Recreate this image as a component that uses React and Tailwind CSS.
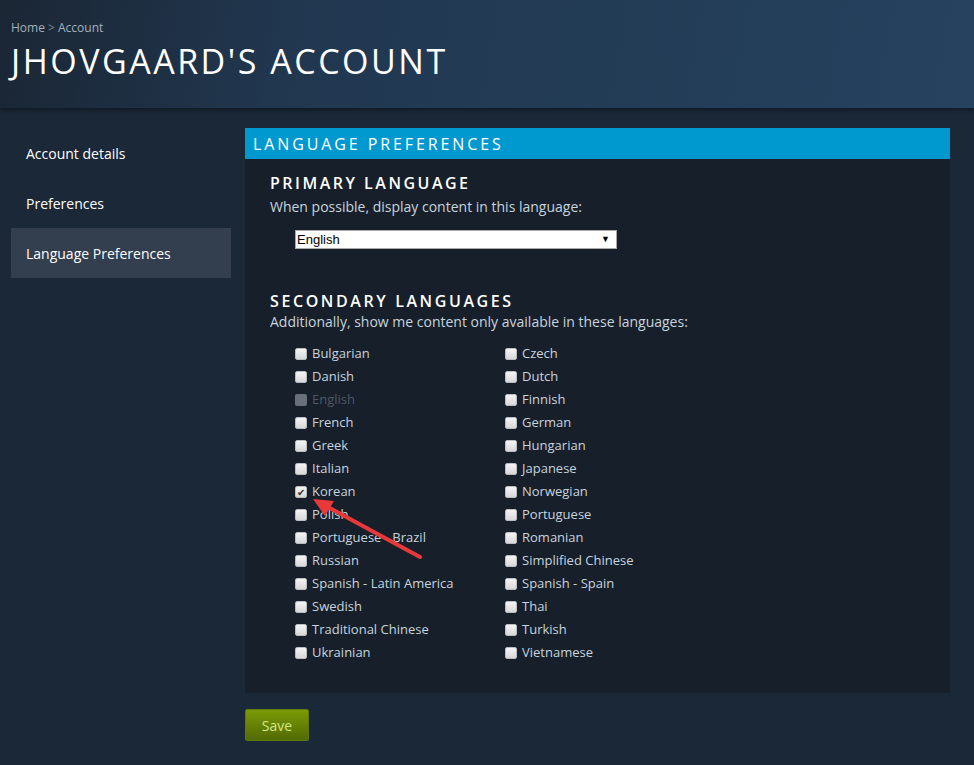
import React from "react";

const LEFT = ["Bulgarian", "Danish", "English", "French", "Greek", "Italian", "Korean", "Polish", "Portuguese - Brazil", "Russian", "Spanish - Latin America", "Swedish", "Traditional Chinese", "Ukrainian"];
const RIGHT = ["Czech", "Dutch", "Finnish", "German", "Hungarian", "Japanese", "Norwegian", "Portuguese", "Romanian", "Simplified Chinese", "Spanish - Spain", "Thai", "Turkish", "Vietnamese"];

function Check({ label }) {
  const disabled = label === "English";
  const checked = label === "Korean";
  return (
    <div className="flex items-center h-[23px] gap-[5px]">
      <span
        className={`w-[12px] h-[12px] rounded-[2px] flex items-center justify-center text-[10px] leading-none text-[#333] ${
          disabled
            ? "bg-[#6a7079]"
            : "bg-[linear-gradient(#f4f4f4,#d8d8d8)] border border-[#b9bcc0]"
        }`}
      >
        {checked ? "✔" : ""}
      </span>
      <span className={disabled ? "text-[#4e5864]" : "text-[#c6d4df]"}>{label}</span>
    </div>
  );
}

export default function App() {
  return (
    <div className="relative min-h-screen w-full bg-[#1b2838] font-['Open_Sans',sans-serif] text-[13px]">
      {/* Header */}
      <div className="h-[108px] bg-[linear-gradient(100deg,#1a2634_0%,#213750_30%,#25425e_100%)] px-[11px] pt-[19px] shadow-[0_2px_4px_rgba(0,0,0,0.4)]">
        <div className="text-[12px] text-[#a4b0bc]">
          Home <span className="text-[#7a8896]">&gt;</span> Account
        </div>
        <h1 className="mt-[6px] text-[34px] leading-[36px] tracking-[2.5px] text-white font-normal">
          JHOVGAARD'S ACCOUNT
        </h1>
      </div>

      <div className="flex pt-[20px] gap-[14px] pl-[11px] pr-[24px]">
        {/* Sidebar */}
        <nav className="w-[220px] shrink-0 text-[14px] text-white">
          <div className="h-[50px] flex items-center pl-[15px]">Account details</div>
          <div className="h-[50px] flex items-center pl-[15px]">Preferences</div>
          <div className="h-[50px] flex items-center pl-[15px] bg-[#333e4e]">Language Preferences</div>
        </nav>

        {/* Main */}
        <div className="flex-1">
          <div className="bg-[#171f2a]">
            <div className="h-[31px] bg-[#0099cf] flex items-center pl-[8px] text-[16px] tracking-[2.9px] text-white">
              LANGUAGE PREFERENCES
            </div>
            <div className="pl-[25px] pt-[13px] pb-[29px]">
              <h2 className="text-[16px] font-semibold tracking-[2.5px] text-white leading-[22px]">PRIMARY LANGUAGE</h2>
              <p className="mt-[3px] text-[14px] text-[#c6d4df] leading-[20px]">When possible, display content in this language:</p>
              <div className="ml-[25px] mt-[13px] w-[322px] h-[19px] bg-white border border-[#a9a9a9] flex items-center justify-between pl-[1px] pr-[6px] font-['Liberation_Sans',sans-serif] text-[13px] text-black">
                <span>English</span>
                <span className="text-[9px]">▼</span>
              </div>

              <h2 className="mt-[41px] text-[16px] font-semibold tracking-[2.6px] text-white leading-[22px]">SECONDARY LANGUAGES</h2>
              <p className="text-[14px] text-[#c6d4df] leading-[20px]">Additionally, show me content only available in these languages:</p>
              <div className="ml-[25px] mt-[10px] grid grid-cols-[210px_210px]">
                <div>
                  {LEFT.map((l) => (
                    <Check key={l} label={l} />
                  ))}
                </div>
                <div>
                  {RIGHT.map((l) => (
                    <Check key={l} label={l} />
                  ))}
                </div>
              </div>
            </div>
          </div>
          <button className="mt-[16px] w-[64px] h-[32px] rounded-[2px] bg-[linear-gradient(#7a9b05,#526a04)] border border-[#5c7a06] text-[14px] text-[#d2e885]">
            Save
          </button>
        </div>
      </div>

      {/* Red arrow annotation */}
      <svg className="absolute left-0 top-0 pointer-events-none" width="974" height="765">
        <line x1="420" y1="557" x2="326" y2="506" stroke="#e8393a" strokeWidth="4" strokeLinecap="round" />
        <polygon points="313,499 334,501 325,516" fill="#e8393a" />
      </svg>
    </div>
  );
}
